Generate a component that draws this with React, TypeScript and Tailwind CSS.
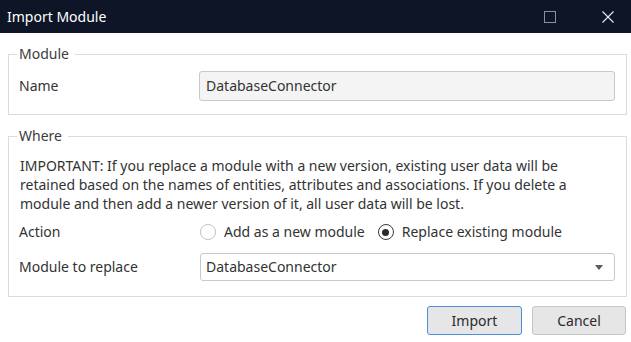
import React from "react";

const FONT = "font-['Noto_Sans','Open_Sans',sans-serif]";

function Radio({ checked, label }: { checked?: boolean; label: string }) {
  return (
    <label className="flex items-center gap-[8px]">
      <span
        className={
          checked
            ? "flex h-[16px] w-[16px] items-center justify-center rounded-full border border-[#3a3a3a] bg-white"
            : "flex h-[16px] w-[16px] items-center justify-center rounded-full border border-[#c2c2c2] bg-white"
        }
      >
        {checked && <span className="h-[7px] w-[7px] rounded-full bg-[#2b2b2b]" />}
      </span>
      <span>{label}</span>
    </label>
  );
}

export default function App() {
  return (
    <div className={`${FONT} h-[342px] w-[631px] overflow-hidden bg-white text-[14px] leading-[20px] text-[#333333]`}>
      {/* title bar */}
      <div className="flex h-[33px] items-center bg-[#0d1526] pl-[7px] text-white">
        <span className="flex-1">Import Module</span>
        <svg width="12" height="12" viewBox="0 0 12 12" className="mr-[46px]">
          <rect x="0.5" y="0.5" width="11" height="11" fill="none" stroke="#8b909a" strokeWidth="1" />
        </svg>
        <svg width="12" height="12" viewBox="0 0 12 12" className="mr-[17px]">
          <path d="M0.5 0.5 L11.5 11.5 M11.5 0.5 L0.5 11.5" stroke="#e8eaee" strokeWidth="1.1" />
        </svg>
      </div>

      <div className="pl-[8px] pr-[4px] pt-[11px]">
        <fieldset className="border border-[#dcdcdc] pb-[13px] pl-[10px] pr-[11px] pt-[7px]">
          <legend className="-ml-[2px] pl-[2px] pr-[6px] text-[#3c3c3c]">Module</legend>
          <div className="flex items-center">
            <span className="w-[180px]">Name</span>
            <div className="flex h-[30px] flex-1 items-center rounded-[3px] border border-[#c9c9c9] bg-[#f4f4f4] pl-[6px]">
              DatabaseConnector
            </div>
          </div>
        </fieldset>

        <fieldset className="mt-[11px] border border-[#dcdcdc] pb-[15px] pl-[11px] pr-[11px] pt-[10px]">
          <legend className="-ml-[3px] pl-[2px] pr-[6px] text-[#3c3c3c]">Where</legend>
          <p className="leading-[19px]">
            IMPORTANT: If you replace a module with a new version, existing user data will be retained based on the
            names of entities, attributes and associations. If you delete a module and then add a newer version of it,
            all user data will be lost.
          </p>
          <div className="mt-[9px] flex items-center">
            <span className="w-[181px] -ml-[1px]">Action</span>
            <div className="flex items-center gap-[13px]">
              <Radio label="Add as a new module" />
              <Radio checked label="Replace existing module" />
            </div>
          </div>
          <div className="mt-[11px] flex items-center">
            <span className="w-[181px] -ml-[1px]">Module to replace</span>
            <div className="flex h-[28px] flex-1 items-center rounded-[3px] border border-[#c9c9c9] bg-white pl-[5px] pr-[11px]">
              <span className="flex-1">DatabaseConnector</span>
              <svg width="8" height="5" viewBox="0 0 8 5">
                <path d="M0 0 H8 L4 5 Z" fill="#5a5a5a" />
              </svg>
            </div>
          </div>
        </fieldset>

        <div className="mt-[9px] flex justify-end gap-[10px] pr-[1px]">
          <button className="h-[29px] w-[95px] rounded-[3px] border border-[#4a8fde] bg-[#e6e6e6] text-[#2b2b2b]">
            Import
          </button>
          <button className="h-[29px] w-[94px] rounded-[3px] border border-[#c6c6c6] bg-[#e6e6e6] text-[#2b2b2b]">
            Cancel
          </button>
        </div>
      </div>
    </div>
  );
}
